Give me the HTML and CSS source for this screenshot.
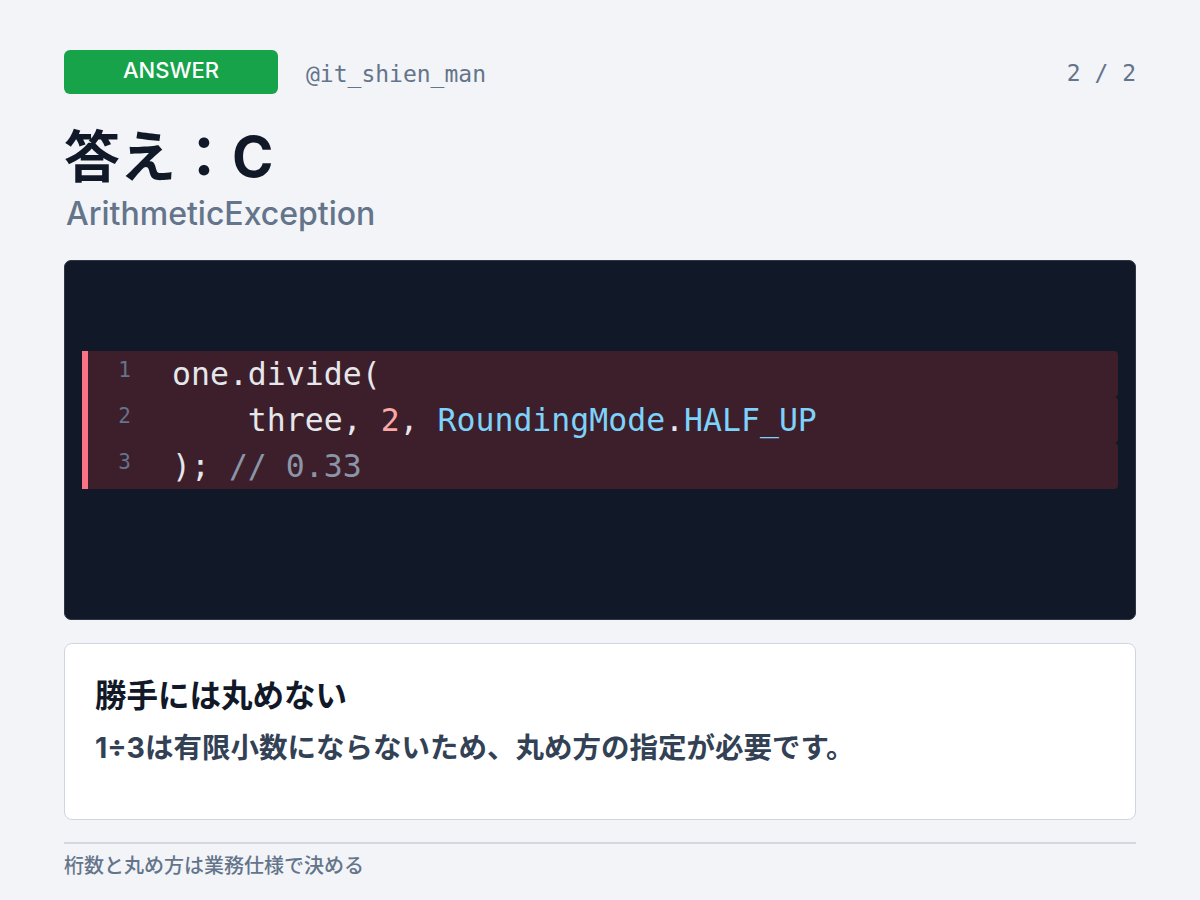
FILE: index.html
```html
<!DOCTYPE html>
<html lang="ja">
<head>
<meta charset="utf-8">
<title>答え：C</title>
<link rel="stylesheet" href="styles.css">
</head>
<body>
<div class="page">
  <header class="top">
    <span class="badge">ANSWER</span>
    <span class="handle">@it_shien_man</span>
    <span class="count">2 / 2</span>
  </header>

  <h1 class="title">答え：C</h1>
  <p class="subtitle">ArithmeticException</p>

  <section class="code">
    <div class="line"><span class="num">1</span><span class="src">one.divide(</span></div>
    <div class="line"><span class="num">2</span><span class="src">    three, <span class="n">2</span>, <span class="t">RoundingMode</span>.<span class="t">HALF_UP</span></span></div>
    <div class="line"><span class="num">3</span><span class="src">); <span class="c">// 0.33</span></span></div>
  </section>

  <section class="card">
    <h2 class="card-title">勝手には丸めない</h2>
    <p class="card-body">1÷3は有限小数にならないため、丸め方の指定が必要です。</p>
  </section>

  <footer class="foot">桁数と丸め方は業務仕様で決める</footer>
</div>
</body>
</html>
```

FILE: styles.css
```css
* { box-sizing: border-box; }

html, body {
  margin: 0;
  padding: 0;
  background: #f2f4f7;
}

body {
  font-family: Inter, "Noto Sans CJK JP", sans-serif;
  color: #111827;
}

.page {
  width: 1200px;
  height: 900px;
  padding: 50px 64px 0 64px;
  display: flex;
  flex-direction: column;
}

.top {
  display: flex;
  align-items: center;
  height: 44px;
}

.badge {
  width: 214px;
  height: 44px;
  background: #16a34a;
  color: #ffffff;
  border-radius: 6px;
  display: flex;
  align-items: center;
  justify-content: center;
  font-family: Inter, sans-serif;
  font-size: 22px;
  font-weight: 500;
  padding-bottom: 5px;
}

.handle {
  margin-left: 28px;
  font-family: "DejaVu Sans Mono", monospace;
  font-size: 23px;
  color: #64748b;
  padding-top: 4px;
}

.count {
  margin-left: auto;
  font-family: "DejaVu Sans Mono", monospace;
  font-size: 23px;
  color: #64748b;
  padding-top: 2px;
}

.title {
  margin: 30px 0 0 0;
  font-family: Inter, "Noto Sans CJK JP", sans-serif;
  font-size: 56px;
  font-weight: 700;
  line-height: 67px;
  color: #111827;
}

.subtitle {
  margin: 4px 0 0 2px;
  font-family: Inter, sans-serif;
  font-size: 32px;
  font-weight: 500;
  line-height: 38px;
  color: #64748b;
}

.code {
  margin-top: 27px;
  height: 360px;
  background: #111827;
  border: 1.5px solid #2d3748;
  border-radius: 7px;
  padding: 90px 17px 0 17px;
  display: flex;
  flex-direction: column;
}

.line {
  display: flex;
  align-items: center;
  height: 46px;
  background: #3d1f2b;
  border-left: 6px solid #fb7185;
  border-radius: 0 4px 4px 0;
  font-family: "DejaVu Sans Mono", monospace;
  white-space: pre;
}

.num {
  width: 43px;
  text-align: right;
  font-size: 21px;
  color: #64748b;
  align-self: flex-start;
  padding-top: 7px;
}

.src {
  margin-left: 41px;
  font-size: 31.5px;
  line-height: 46px;
  color: #e5e7eb;
}

.n { color: #f9a8a8; }
.t { color: #7dd3fc; }
.c { color: #8b95a8; }

.card {
  margin-top: 23px;
  height: 177px;
  background: #ffffff;
  border: 1.5px solid #cfd6e1;
  border-radius: 8px;
  padding: 28px 30px 0 30px;
}

.card-title {
  margin: 0;
  font-family: "Noto Sans CJK JP", sans-serif;
  font-size: 31.5px;
  font-weight: 700;
  line-height: 42px;
  color: #111827;
}

.card-body {
  margin: 14px 0 0 0;
  font-family: Inter, "Noto Sans CJK JP", sans-serif;
  font-size: 28.5px;
  font-weight: 700;
  line-height: 39px;
  color: #334155;
}

.foot {
  margin-top: 22px;
  border-top: 2px solid #d3d8df;
  padding-top: 7px;
  font-family: "Noto Sans CJK JP", sans-serif;
  font-size: 20px;
  font-weight: 500;
  line-height: 28px;
  color: #64748b;
}
```
